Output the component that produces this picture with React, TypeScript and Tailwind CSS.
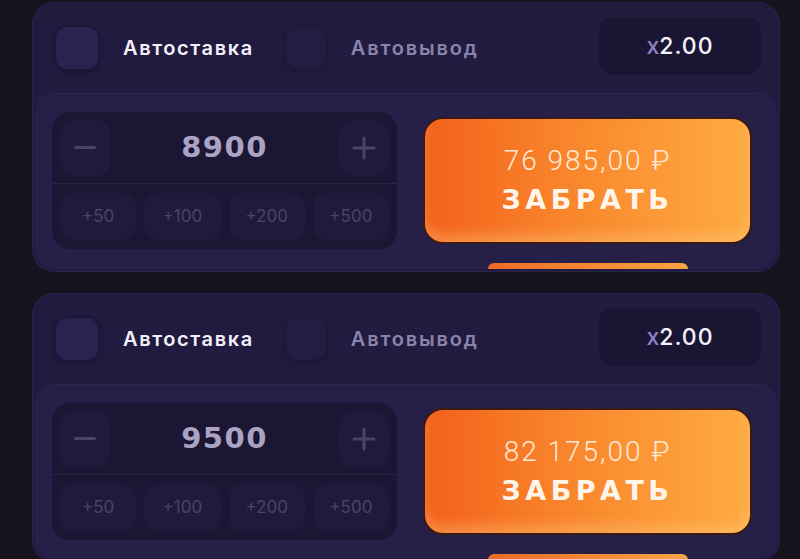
import React from "react";

const quickSteps = ["+50", "+100", "+200", "+500"];

const bets = [
  { amount: "8900", payout: "76 985,00 ₽" },
  { amount: "9500", payout: "82 175,00 ₽" },
];

const BetCard = ({ amount, payout }: { amount: string; payout: string }) => {
  return (
    <div className="w-[748px] shrink-0 overflow-hidden rounded-[22px] border border-[#29224b] bg-[#221b40] px-[2px] pb-[2px]">
      {/* top row */}
      <div className="flex h-[90px] items-center pl-[21px] pr-[16px]">
        <div className="h-[42px] w-[42px] rounded-[11px] bg-[#2a2352] shadow-[0_0_0_2px_#1c1736,0_2px_6px_rgba(0,0,0,0.35)]"></div>
        <span className="ml-[25px] text-[20px] font-semibold tracking-[1.6px] text-[#f2f0fa]">
          Автоставка
        </span>
        <div className="ml-[32px] h-[40px] w-[40px] rounded-[11px] bg-[#231d44] shadow-[0_0_0_2px_#1e1939,0_2px_6px_rgba(0,0,0,0.3)]"></div>
        <span className="ml-[25px] text-[20px] font-semibold tracking-[1.8px] text-[#8a84aa]">
          Автовывод
        </span>
        <div className="ml-auto mb-[4px] flex h-[58px] w-[162px] items-center justify-center rounded-[14px] bg-[#1a1532]">
          <span className="text-[23px] font-medium text-[#8c83c4]">x</span>
          <span className="text-[23px] font-medium tracking-[1px] text-[#f4f2fb]">2.00</span>
        </div>
      </div>

      {/* bet section */}
      <div className="flex h-[176px] items-start gap-[26px] overflow-hidden rounded-[20px] border-t border-[#2d2554] bg-[#261f48] pl-[17px] pr-[25px] pt-[18px]">
        <div className="w-[345px] rounded-[18px] bg-[#1b1634]">
          <div className="flex h-[71px] items-center justify-between px-[8px]">
            <div className="flex h-[56px] w-[50px] items-center justify-center rounded-[14px] bg-[#201a3d]">
              <div className="h-[3px] w-[22px] rounded-full bg-[#4a4468]"></div>
            </div>
            <span
              className="text-[29px] font-bold tracking-[1.5px] text-[#aaa4c2]"
              style={{ fontFamily: '"DejaVu Sans", sans-serif' }}
            >
              {amount}
            </span>
            <div className="flex h-[56px] w-[50px] items-center justify-center rounded-[14px] bg-[#201a3d]">
              <svg width="24" height="24" viewBox="0 0 24 24">
                <path d="M12 2v20M2 12h20" stroke="#4a4468" strokeWidth="3" strokeLinecap="round" />
              </svg>
            </div>
          </div>
          <div className="grid grid-cols-4 gap-[8px] border-t border-[#2a2448] px-[8px] pb-[9px] pt-[9px]">
            {quickSteps.map((step) => (
              <div
                key={step}
                className="flex h-[47px] items-center justify-center rounded-[13px] bg-[#201a3c] text-[17px] text-[#4a4469]"
              >
                {step}
              </div>
            ))}
          </div>
        </div>

        <div className="flex flex-1 flex-col items-center pt-[5px]">
          <button className="relative flex h-[127px] w-full flex-col items-center justify-center overflow-hidden rounded-[20px] border-2 border-[#3a1b12] bg-gradient-to-r from-[#f3601a] via-[#f98a2e] to-[#ffab43] shadow-[inset_0_-8px_12px_rgba(255,205,140,0.35)]">
            <span
              className="text-[28px] font-light tracking-[2px] text-[#ffe9d6]"
              style={{ fontFamily: "Roboto, sans-serif" }}
            >
              {payout}
            </span>
            <span
              className="-mt-[2px] text-[27px] font-bold tracking-[4.5px] text-[#fff5ea]"
              style={{ fontFamily: '"DejaVu Sans", sans-serif' }}
            >
              ЗАБРАТЬ
            </span>
          </button>
          <div className="mt-[19px] h-[10px] w-[200px] rounded-t-[6px] bg-gradient-to-r from-[#ef6a25] to-[#f8a443]"></div>
        </div>
      </div>
    </div>
  );
};

export default function App() {
  return (
    <div
      className="flex h-[559px] w-[800px] flex-col gap-[21px] overflow-hidden bg-[#16131f] pl-[32px] pt-[2px]"
      style={{ fontFamily: "Inter, sans-serif" }}
    >
      {bets.map((bet) => (
        <BetCard key={bet.amount} amount={bet.amount} payout={bet.payout} />
      ))}
    </div>
  );
}
